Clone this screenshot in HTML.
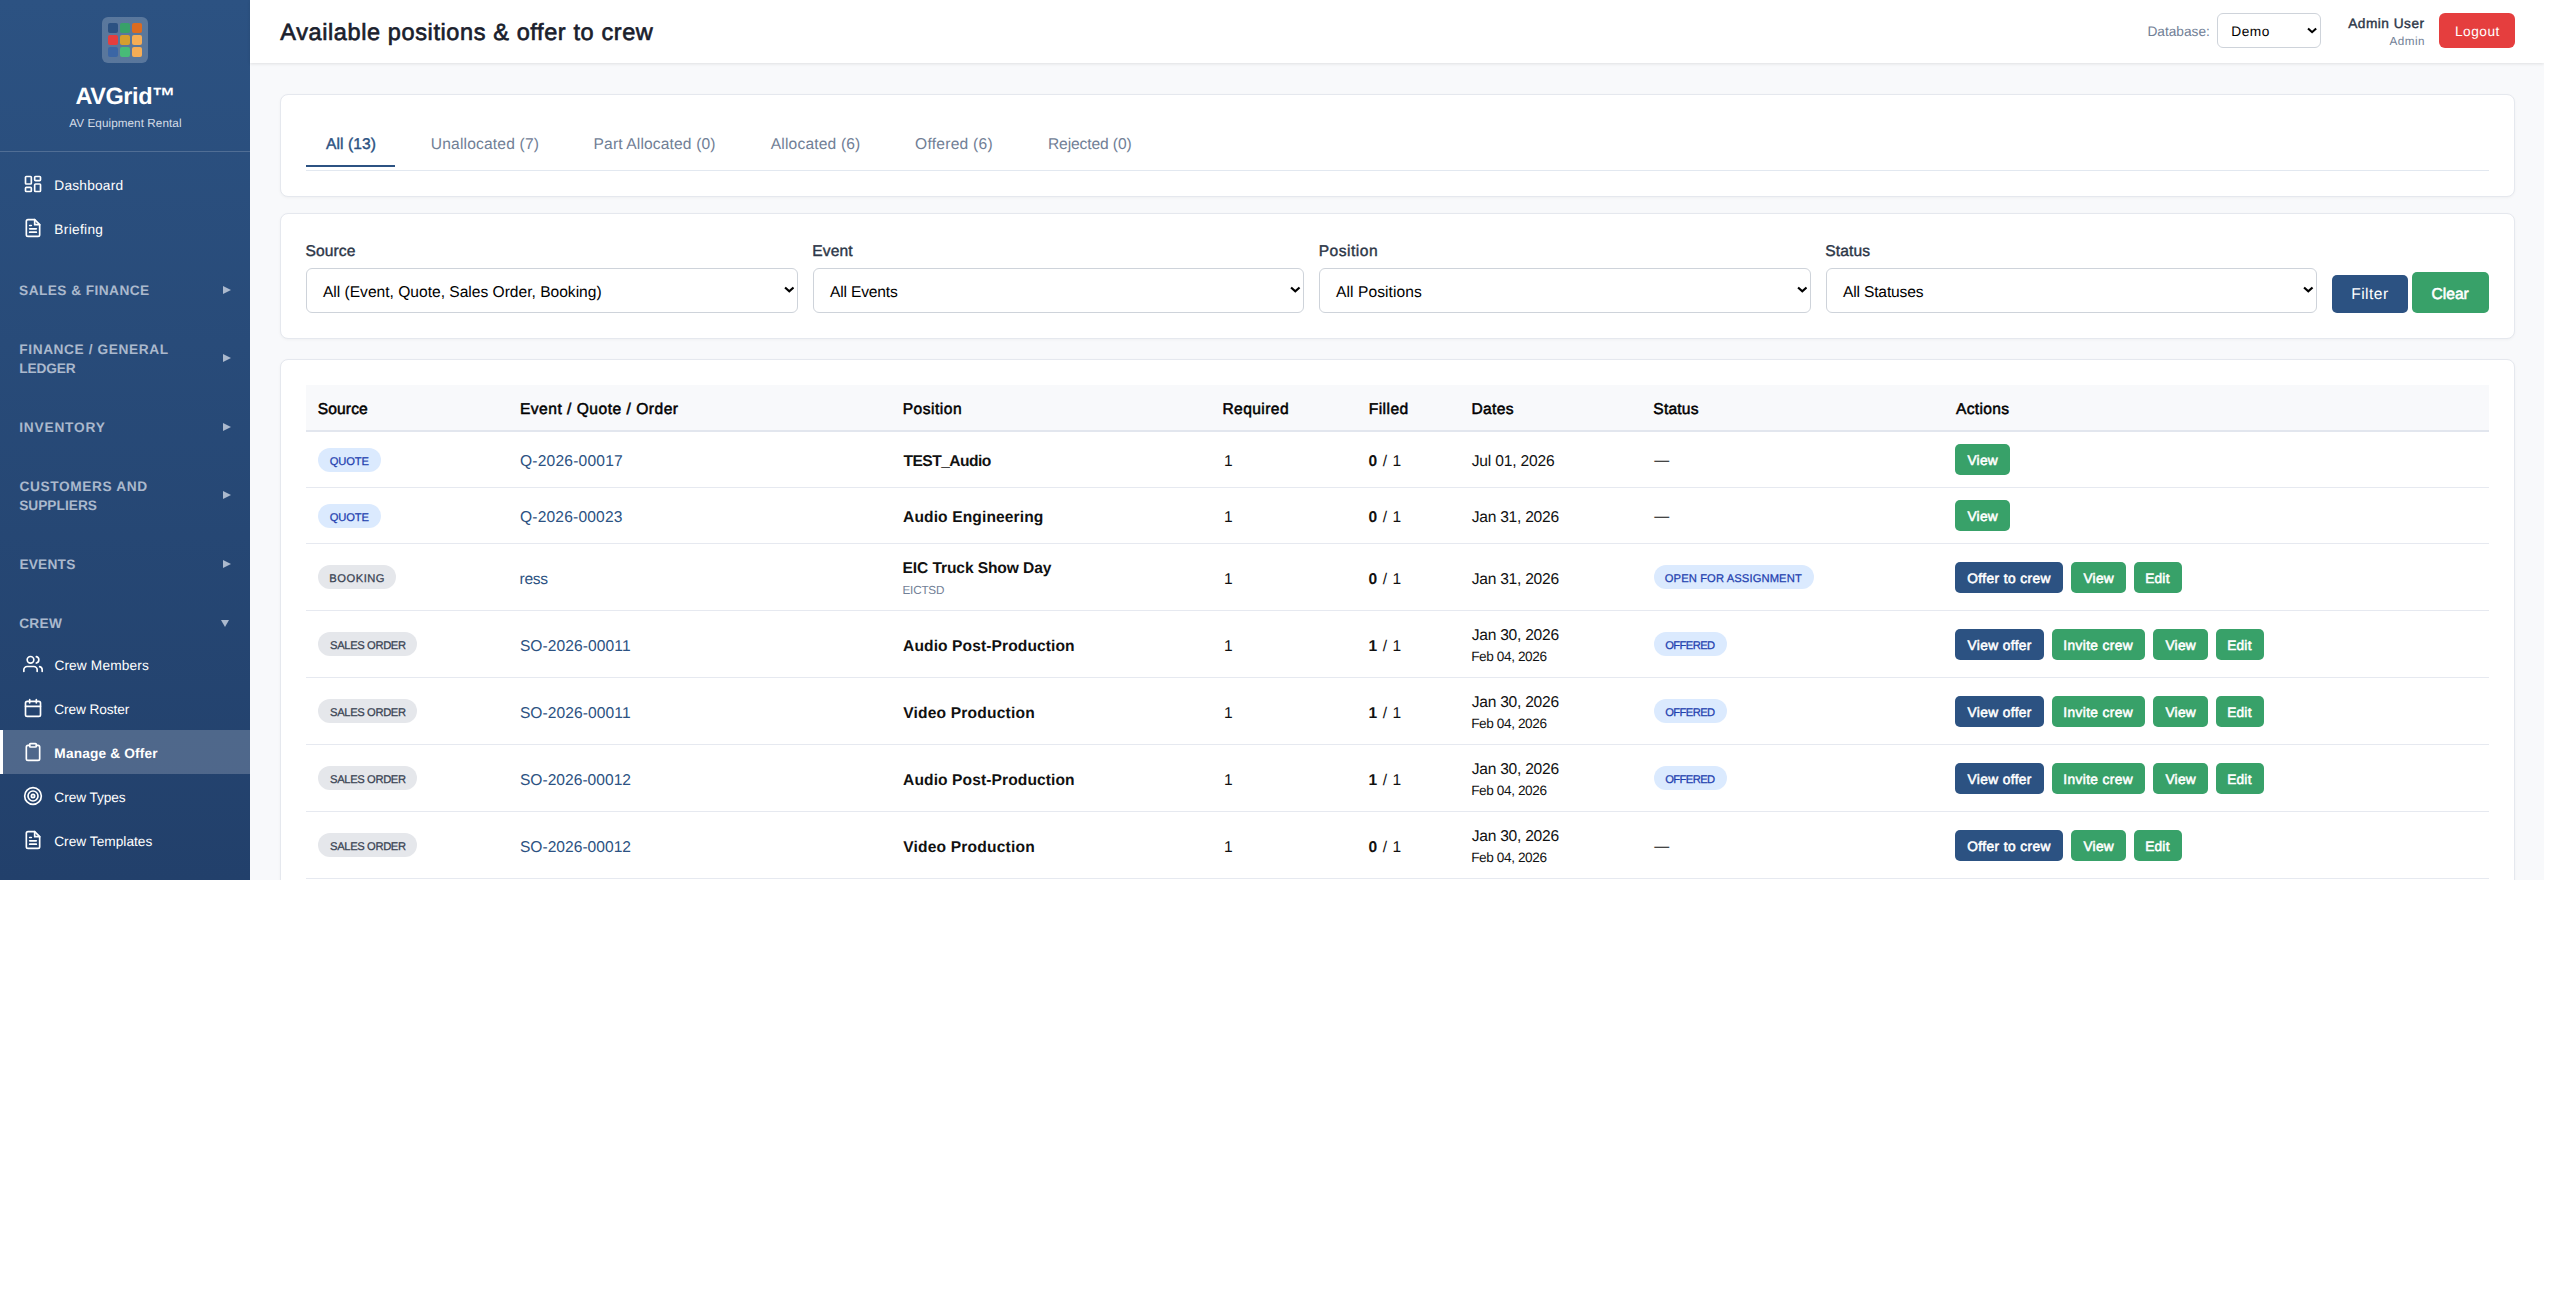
<!DOCTYPE html>
<html lang="en">
<head>
<meta charset="utf-8">
<title>Available positions &amp; offer to crew</title>
<style>
*{box-sizing:border-box;margin:0;padding:0}
html,body{width:2555px;height:1308px;background:#fff;overflow:hidden}
body{font-family:"Liberation Sans",sans-serif;font-size:16px;color:#111;position:relative;text-rendering:geometricPrecision}
#app{position:absolute;left:0;top:0;width:2544px;height:880px;overflow:hidden;background:#f8f9fb}
/* ---------- sidebar ---------- */
#sb{position:absolute;left:0;top:0;width:250px;height:880px;background:linear-gradient(180deg,#2c5282 0%,#22406b 100%);color:#fff;overflow:hidden}
#logo{position:absolute;left:102px;top:17px;width:46px;height:46px;border-radius:6px;background:rgba(255,255,255,.22)}
#logo i{position:absolute;width:10px;height:10px;border-radius:2px}
#brand{position:absolute;left:0;width:250px;top:80px;text-align:center;font-weight:700;font-size:23.5px;line-height:30px}
#sub{position:absolute;left:0;width:250px;top:114px;text-align:center;font-size:11.7px;line-height:18px;color:#d5dde8}
#sbline{position:absolute;left:0;top:151px;width:250px;height:1px;background:rgba(255,255,255,.18)}
.it{position:absolute;left:0;width:250px;height:44px;font-size:13.7px;line-height:46px;color:#fff;white-space:nowrap}
.it>span{position:absolute;left:55px;top:0}
.it svg{position:absolute;left:23px;top:12px;width:20px;height:20px;fill:none;stroke:#fff;stroke-width:2;stroke-linecap:round;stroke-linejoin:round}
.it.on{background:rgba(255,255,255,.2);box-shadow:inset 3px 0 0 #fff}
.it.on>span{font-weight:700}
.sh{position:absolute;left:20px;width:200px;font-size:13.7px;line-height:19.1px;font-weight:700;letter-spacing:.2px;color:#abb9cd;text-transform:uppercase;white-space:nowrap}
.ar{position:absolute;width:0;height:0;border-style:solid}
.ar.r{left:222.8px;margin-top:-.3px;border-width:4.55px 0 4.55px 8px;border-color:transparent transparent transparent #abb9cd}
.ar.d{left:220.5px;margin-top:-.2px;border-width:7.6px 4.65px 0 4.65px;border-color:#abb9cd transparent transparent transparent}
/* ---------- header ---------- */
#hd{position:absolute;left:250px;top:0;width:2294px;height:63px;background:#fff;box-shadow:0 1px 3px rgba(0,0,0,.1)}
#hd h1{position:absolute;left:30px;top:14px;font-size:23.5px;line-height:34px;font-weight:400;color:#1a202c;white-space:nowrap}

.sb6{-webkit-text-stroke:.4px currentColor}
#hd .dbl{position:absolute;left:1898px;top:21px;font-size:13.7px;line-height:20px;color:#718096;white-space:nowrap}
.sel{position:absolute;background:#fff;border:1px solid #ced3da;border-radius:6px;white-space:nowrap;color:#000}
.sel b{position:absolute;font-weight:400}
.sel svg{position:absolute;fill:none;stroke:#000;stroke-width:2.25;stroke-linecap:butt;stroke-linejoin:miter}
#dbsel{left:1967px;top:13px;width:104px;height:35px;font-size:13.7px;line-height:33px}
#dbsel b{left:14px;top:0}
#dbsel svg{left:89.3px;top:13.2px;width:10.2px;height:7.4px}
#hd .un{position:absolute;right:119px;top:13px;font-size:13.7px;line-height:20px;font-weight:400;color:#2d3748;white-space:nowrap}
#hd .ur{position:absolute;right:119px;top:33px;font-size:11.7px;line-height:16px;color:#718096;white-space:nowrap}
#logout{position:absolute;left:2189px;top:13px;width:76px;height:35px;border-radius:6px;background:#e53e3e;color:#fff;font-size:13.7px;line-height:35px;text-align:center}
.card{position:absolute;left:280px;width:2235px;background:#fff;border:1px solid #e5e8ee;border-radius:8px;box-shadow:0 1px 3px rgba(0,0,0,.04)}
.tab{position:absolute;top:136px;font-size:15.6px;line-height:22px;color:#718096;white-space:nowrap}
.tab.on{color:#2c5282}
#tabul{position:absolute;left:306px;top:165px;width:89px;height:2px;background:#2c5282}
#tabln{position:absolute;left:306px;top:170px;width:2183px;height:1px;background:#e2e8f0}
.lbl{position:absolute;top:239px;font-size:15.6px;line-height:22px;color:#2d3748;white-space:nowrap}
.fsel{top:268px;width:491.6px;height:45px;font-size:15.6px;line-height:43px}
.fsel b{left:16px;top:0}
.fsel svg{left:476.8px;top:16.9px;width:10.6px;height:7.7px}
.btn{position:absolute;color:#fff;text-align:center;white-space:nowrap;border-radius:5px}
.bl{background:#2c5282}.gr{background:#38a169}
#bfilter{left:2332px;top:275px;width:76px;height:38px;font-size:15.6px;line-height:37px}
#bclear{left:2412px;top:272px;width:77px;height:41px;font-size:15.6px;line-height:41px}
/* table */
#tb{position:absolute;left:306px;top:385px;width:2183px}
.tr{position:absolute;left:0;width:2183px;border-bottom:1px solid #e6e9f0}
.th{position:absolute;left:0;top:0;width:2183px;height:47px;background:#f8f9fb;border-bottom:2px solid #e2e6ee}
.th>span{position:absolute;top:12px;font-size:15.6px;line-height:22px;color:#000;white-space:nowrap;font-weight:400;-webkit-text-stroke:.5px currentColor}
.c{position:absolute;white-space:nowrap;font-size:15.6px;line-height:22px;color:#111}
.c1{left:12px}.c2{left:214px}.c3{left:597px}.c4{left:917px}.c5{left:1063px}.c6{left:1166px}.c7{left:1348px}.c8{left:1649px}
a.c,.lk{color:#2c5282;text-decoration:none}
.bd{position:absolute;height:24px;border-radius:12px;font-size:11.2px;line-height:24px;text-align:center;white-space:nowrap}
.bq{background:#dbeafe;color:#1e40af}
.bg{background:#e5e7eb;color:#374151}
.sm{font-size:11.7px;color:#718096}
.d2{font-size:13.6px;color:#111}
.ab{position:absolute;height:31px;border-radius:5px;color:#fff;font-size:13.7px;line-height:31px;text-align:center;white-space:nowrap}
.tall .c4,.tall .c5,.tall span.c.c7{margin-top:.7px}
.t-em{position:relative;top:1.5px;left:.3px;font-size:15px}
.ab.sb6,#bclear.sb6{-webkit-text-stroke:.55px currentColor}
.bd .sb6{-webkit-text-stroke:.25px currentColor}
#hd h1.sb6{-webkit-text-stroke:.65px currentColor}
/*TUNE*/
.t-bb{letter-spacing:0.504px;position:relative;left:0.18px;top:2.01px}
.t-bc{letter-spacing:-0.008px;position:relative;left:-0.36px;top:2.01px}
.t-be{letter-spacing:0.245px;position:relative;left:-0.37px;top:1.00px}
.t-bf{letter-spacing:0.452px;position:relative;left:-0.11px;top:1.00px}
.t-bi{letter-spacing:0.405px;position:relative;left:-0.33px;top:1.00px}
.t-bo{letter-spacing:0.438px;position:relative;left:0.06px;top:1.00px}
.t-bq{letter-spacing:-0.125px;position:relative;left:0.06px;top:2.01px}
.t-brand{letter-spacing:-0.439px;position:relative;left:0.30px;top:1.00px}
.t-brief{letter-spacing:0.308px;position:relative;left:-0.66px;top:1.00px}
.t-bs{letter-spacing:-0.363px;position:relative;left:0.38px;top:2.01px}
.t-bv{letter-spacing:0.246px;position:relative;left:0.44px;top:1.00px}
.t-bvo{letter-spacing:0.400px;position:relative;left:0.13px;top:1.00px}
.t-cm{letter-spacing:0.148px;position:relative;left:-0.64px;top:1.01px}
.t-cr{letter-spacing:-0.115px;position:relative;left:-0.66px;top:1.00px}
.t-crew0{letter-spacing:0.264px;position:relative;left:-0.82px;top:0.41px}
.t-cs0{letter-spacing:0.609px;position:relative;left:-0.45px;top:0.42px}
.t-cs1{letter-spacing:0.024px;position:relative;left:-0.85px;top:0.33px}
.t-ct{letter-spacing:-0.079px;position:relative;left:-0.65px;top:1.00px}
.t-ctp{letter-spacing:0.025px;position:relative;left:-0.87px;top:1.00px}
.t-d1{letter-spacing:-0.172px;position:relative;left:-0.31px;top:2.51px}
.t-d2{letter-spacing:-0.250px;position:relative;left:-0.31px;top:2.51px}
.t-d3{letter-spacing:-0.250px;position:relative;left:-0.31px;top:3.01px}
.t-dash{letter-spacing:0.218px;position:relative;left:-0.69px;top:1.00px}
.t-db{letter-spacing:0.012px;position:relative;left:-0.62px;top:1.01px}
.t-dd{letter-spacing:-0.385px;position:relative;left:-0.88px;top:2.00px}
.t-demo{letter-spacing:0.522px;position:relative;left:-0.69px;top:1.01px}
.t-ev0{letter-spacing:0.222px;position:relative;left:-0.62px;top:0.50px}
.t-fg0{letter-spacing:0.596px;position:relative;left:-0.71px;top:0.50px}
.t-fg1{letter-spacing:-0.151px;position:relative;left:-0.66px;top:0.41px}
.t-fl{letter-spacing:0.569px;position:relative;left:-0.40px;top:2.51px}
.t-h1{letter-spacing:0.143px;position:relative;left:-0.39px;top:2.01px}
.t-h2{letter-spacing:0.498px;position:relative;left:-0.13px;top:2.01px}
.t-h3{letter-spacing:0.493px;position:relative;left:-0.29px;top:2.01px}
.t-h4{letter-spacing:0.426px;position:relative;left:-0.64px;top:2.00px}
.t-h5{letter-spacing:0.436px;position:relative;left:-0.29px;top:2.01px}
.t-h6{letter-spacing:0.341px;position:relative;left:-0.63px;top:2.01px}
.t-h7{letter-spacing:0.180px;position:relative;left:-0.67px;top:2.01px}
.t-h8{letter-spacing:0.327px;position:relative;left:0.94px;top:2.01px}
.t-inv0{letter-spacing:0.808px;position:relative;left:-0.78px;top:0.50px}
.t-k1{letter-spacing:0.201px;position:relative;left:-0.01px;top:2.50px}
.t-k2{letter-spacing:0.175px;position:relative;left:-0.01px;top:2.50px}
.t-k3{letter-spacing:-0.324px;position:relative;left:-0.47px;top:3.00px}
.t-k4{letter-spacing:0.077px;position:relative;left:-0.14px;top:3.01px}
.t-k5{letter-spacing:0.014px;position:relative;left:-0.14px;top:3.01px}
.t-l1{letter-spacing:0.122px;position:relative;left:-0.58px;top:2.01px}
.t-l2{letter-spacing:0.086px;position:relative;left:-0.33px;top:2.01px}
.t-l3{letter-spacing:0.500px;position:relative;left:-0.34px;top:2.01px}
.t-l4{letter-spacing:0.107px;position:relative;left:-0.25px;top:2.01px}
.t-lo{letter-spacing:0.520px;position:relative;left:0.39px;top:1.01px}
.t-mo{letter-spacing:0.161px;position:relative;left:-0.65px;top:1.01px}
.t-p1{letter-spacing:-0.521px;position:relative;left:0.40px;top:2.51px}
.t-p2{letter-spacing:0.104px;position:relative;left:0.07px;top:2.50px}
.t-p3{letter-spacing:-0.115px;position:relative;left:-0.45px;top:2.01px}
.t-p4{letter-spacing:0.089px;position:relative;left:0.07px;top:3.01px}
.t-p5{letter-spacing:0.177px;position:relative;left:0.23px;top:3.01px}
.t-rq{position:relative;left:1.03px;top:2.50px}
.t-s1{letter-spacing:-0.010px;position:relative;left:-0.09px;top:2.01px}
.t-s2{letter-spacing:-0.164px;position:relative;left:0.34px;top:2.01px}
.t-s3{letter-spacing:0.072px;position:relative;left:0.00px;top:2.00px}
.t-s4{letter-spacing:-0.158px;position:relative;left:0.33px;top:2.01px}
.t-sf0{letter-spacing:0.440px;position:relative;left:-0.90px;top:0.51px}
.t-sf2{letter-spacing:-0.571px;position:relative;left:-0.46px;top:2.00px}
.t-so{letter-spacing:0.116px;position:relative;left:-0.71px;top:2.01px}
.t-sub{letter-spacing:-0.202px;position:relative;left:-0.47px;top:2.01px}
.t-sub0{letter-spacing:0.077px;position:relative;left:0.42px;top:1.00px}
.t-tab1{letter-spacing:0.076px;position:relative;left:-0.05px;top:-2.00px}
.t-tab2{letter-spacing:0.174px;position:relative;left:-1.21px;top:-2.00px}
.t-tab3{letter-spacing:0.135px;position:relative;left:-1.44px;top:-2.01px}
.t-tab4{letter-spacing:0.163px;position:relative;left:-0.23px;top:-2.01px}
.t-tab5{letter-spacing:0.250px;position:relative;left:-0.95px;top:-2.01px}
.t-tab6{letter-spacing:-0.110px;position:relative;left:-0.06px;top:-2.01px}
.t-title{letter-spacing:0.609px;position:relative;left:0.30px;top:1.01px}
.t-un{letter-spacing:0.488px;position:relative;left:-0.42px;top:1.00px}
.t-ur{letter-spacing:0.493px;position:relative;left:0.09px;top:1.00px}
/*ENDTUNE*/
</style>
</head>
<body>
<div id="app">
  <div id="sb">
    <div id="logo">
      <i style="left:6px;top:6px;background:#2c5282"></i><i style="left:18px;top:6px;background:#38a169"></i><i style="left:30px;top:6px;background:#dd6b20"></i>
      <i style="left:6px;top:18px;background:#e53e3e"></i><i style="left:18px;top:18px;background:#d69e2e"></i><i style="left:30px;top:18px;background:#f6ad55"></i>
      <i style="left:6px;top:30px;background:#3b66a5"></i><i style="left:18px;top:30px;background:#48bb78"></i><i style="left:30px;top:30px;background:#f6ad55"></i>
    </div>
    <div id="brand"><span class="t-brand">AVGrid™</span></div>
    <div id="sub"><span class="t-sub0">AV Equipment Rental</span></div>
    <div id="sbline"></div>
    <div class="it" style="top:162px"><svg viewBox="0 0 24 24"><rect x="3" y="3" width="7" height="9" rx="1"/><rect x="14" y="3" width="7" height="5" rx="1"/><rect x="14" y="12" width="7" height="9" rx="1"/><rect x="3" y="16" width="7" height="5" rx="1"/></svg><span><span class="t-dash">Dashboard</span></span></div>
    <div class="it" style="top:206px"><svg viewBox="0 0 24 24"><path d="M14 2H6a2 2 0 0 0-2 2v16a2 2 0 0 0 2 2h12a2 2 0 0 0 2-2V8z"/><path d="M14 2v6h6"/><path d="M10 9H8"/><path d="M16 13H8"/><path d="M16 17H8"/></svg><span><span class="t-brief">Briefing</span></span></div>
    <div class="it" style="top:642px"><svg viewBox="0 0 24 24"><path d="M17 21v-2a4 4 0 0 0-4-4H5a4 4 0 0 0-4 4v2"/><circle cx="9" cy="7" r="4"/><path d="M23 21v-2a4 4 0 0 0-3-3.87"/><path d="M16 3.13a4 4 0 0 1 0 7.75"/></svg><span><span class="t-cm">Crew Members</span></span></div>
    <div class="it" style="top:686px"><svg viewBox="0 0 24 24"><path d="M8 2v4"/><path d="M16 2v4"/><rect width="18" height="18" x="3" y="4" rx="2"/><path d="M3 10h18"/></svg><span><span class="t-cr">Crew Roster</span></span></div>
    <div class="it on" style="top:730px"><svg viewBox="0 0 24 24"><rect width="8" height="4" x="8" y="2" rx="1" ry="1"/><path d="M16 4h2a2 2 0 0 1 2 2v14a2 2 0 0 1-2 2H6a2 2 0 0 1-2-2V6a2 2 0 0 1 2-2h2"/></svg><span><span class="t-mo">Manage &amp; Offer</span></span></div>
    <div class="it" style="top:774px"><svg viewBox="0 0 24 24"><circle cx="12" cy="12" r="10"/><circle cx="12" cy="12" r="6"/><circle cx="12" cy="12" r="2"/></svg><span><span class="t-ct">Crew Types</span></span></div>
    <div class="it" style="top:818px"><svg viewBox="0 0 24 24"><path d="M14 2H6a2 2 0 0 0-2 2v16a2 2 0 0 0 2 2h12a2 2 0 0 0 2-2V8z"/><path d="M14 2v6h6"/><path d="M10 9H8"/><path d="M16 13H8"/><path d="M16 17H8"/></svg><span><span class="t-ctp">Crew Templates</span></span></div>
    <div class="sh" style="top:280.5px"><span class="t-sf0">Sales &amp; Finance</span></div>
    <div class="ar r" style="top:286.25px"></div>
    <div class="sh" style="top:339.5px"><span class="t-fg0">Finance / General</span><br><span class="t-fg1">Ledger</span></div>
    <div class="ar r" style="top:354.35px"></div>
    <div class="sh" style="top:417.5px"><span class="t-inv0">Inventory</span></div>
    <div class="ar r" style="top:423.35px"></div>
    <div class="sh" style="top:476.6px"><span class="t-cs0">Customers and</span><br><span class="t-cs1">Suppliers</span></div>
    <div class="ar r" style="top:491.35px"></div>
    <div class="sh" style="top:554.5px"><span class="t-ev0">Events</span></div>
    <div class="ar r" style="top:560.45px"></div>
    <div class="sh" style="top:613.6px"><span class="t-crew0">Crew</span></div>
    <div class="ar d" style="top:620.1px"></div>
  </div>
  <div id="hd">
    <h1 class="sb6"><span class="t-title">Available positions &amp; offer to crew</span></h1>
    <div class="dbl"><span class="t-db">Database:</span></div>
    <div class="sel" id="dbsel"><b><span class="t-demo">Demo</span></b><svg viewBox="0 0 11 8"><path d="M1.1 1.5 5.5 5.6 9.9 1.5"/></svg></div>
    <div class="un sb6"><span class="t-un">Admin User</span></div>
    <div class="ur"><span class="t-ur">Admin</span></div>
    <div id="logout"><span class="t-lo">Logout</span></div>
  </div>
  <div id="main">
    <div class="card" style="top:94px;height:103px"></div>
    <div class="card" style="top:213px;height:126px"></div>
    <div class="card" style="top:359px;height:561px"></div>
    <div class="tab on sb6" style="left:326px"><span class="t-tab1">All (13)</span></div>
    <div class="tab" style="left:432px"><span class="t-tab2">Unallocated (7)</span></div>
    <div class="tab" style="left:595px"><span class="t-tab3">Part Allocated (0)</span></div>
    <div class="tab" style="left:771px"><span class="t-tab4">Allocated (6)</span></div>
    <div class="tab" style="left:916px"><span class="t-tab5">Offered (6)</span></div>
    <div class="tab" style="left:1048px"><span class="t-tab6">Rejected (0)</span></div>
    <div id="tabul"></div><div id="tabln"></div>
    <div class="lbl sb6" style="left:306px"><span class="t-l1">Source</span></div>
    <div class="sel fsel" style="left:306px"><b><span class="t-s1">All (Event, Quote, Sales Order, Booking)</span></b><svg viewBox="0 0 11 8"><path d="M1.1 1.5 5.5 5.6 9.9 1.5"/></svg></div>
    <div class="lbl sb6" style="left:812.6px"><span class="t-l2">Event</span></div>
    <div class="sel fsel" style="left:812.6px"><b><span class="t-s2">All Events</span></b><svg viewBox="0 0 11 8"><path d="M1.1 1.5 5.5 5.6 9.9 1.5"/></svg></div>
    <div class="lbl sb6" style="left:1319px"><span class="t-l3">Position</span></div>
    <div class="sel fsel" style="left:1319px"><b><span class="t-s3">All Positions</span></b><svg viewBox="0 0 11 8"><path d="M1.1 1.5 5.5 5.6 9.9 1.5"/></svg></div>
    <div class="lbl sb6" style="left:1825.6px"><span class="t-l4">Status</span></div>
    <div class="sel fsel" style="left:1825.6px"><b><span class="t-s4">All Statuses</span></b><svg viewBox="0 0 11 8"><path d="M1.1 1.5 5.5 5.6 9.9 1.5"/></svg></div>
    <div class="btn bl" id="bfilter"><span class="t-bf">Filter</span></div>
    <div class="btn gr sb6" id="bclear"><span class="t-bc">Clear</span></div>
    <div id="tb">
      <div class="th"><span class="c1"><span class="t-h1">Source</span></span><span class="c2"><span class="t-h2">Event / Quote / Order</span></span><span class="c3"><span class="t-h3">Position</span></span><span class="c4"><span class="t-h4">Required</span></span><span class="c5"><span class="t-h5">Filled</span></span><span class="c6"><span class="t-h6">Dates</span></span><span class="c7"><span class="t-h7">Status</span></span><span class="c8"><span class="t-h8">Actions</span></span></div>
      <div class="tr" style="top:47px;height:56px"><span class="bd bq c1" style="top:16px;width:62.5px"><span class="t-bq sb6">QUOTE</span></span><a class="c c2" style="top:16.5px"><span class="t-k1">Q-2026-00017</span></a><span class="c c3" style="top:16.5px"><b class="t-p1">TEST_Audio</b></span><span class="c c4" style="top:16.5px"><span class="t-rq">1</span></span><span class="c c5" style="top:16.5px"><span class="t-fl"><b>0</b> / 1</span></span><span class="c c6" style="top:16.5px"><span class="t-d1">Jul 01, 2026</span></span><span class="c c7" style="top:16.5px"><span class="t-em">—</span></span><span class="ab gr sb6" style="left:1649px;top:12.0px;width:54.5px"><span class="t-bv">View</span></span></div>
      <div class="tr" style="top:103px;height:56px"><span class="bd bq c1" style="top:16px;width:62.5px"><span class="t-bq sb6">QUOTE</span></span><a class="c c2" style="top:16.5px"><span class="t-k2">Q-2026-00023</span></a><span class="c c3" style="top:16.5px"><b class="t-p2">Audio Engineering</b></span><span class="c c4" style="top:16.5px"><span class="t-rq">1</span></span><span class="c c5" style="top:16.5px"><span class="t-fl"><b>0</b> / 1</span></span><span class="c c6" style="top:16.5px"><span class="t-d2">Jan 31, 2026</span></span><span class="c c7" style="top:16.5px"><span class="t-em">—</span></span><span class="ab gr sb6" style="left:1649px;top:12.0px;width:54.5px"><span class="t-bv">View</span></span></div>
      <div class="tr tall" style="top:159px;height:67px"><span class="bd bg c1" style="top:21.0px;width:78px"><span class="t-bb sb6">BOOKING</span></span><a class="c c2" style="top:22.0px"><span class="t-k3">ress</span></a><span class="c c3" style="top:12.0px"><b class="t-p3">EIC Truck Show Day</b></span><span class="c c3 sm" style="top:34.0px"><span class="t-sub">EICTSD</span></span><span class="c c4" style="top:22.0px"><span class="t-rq">1</span></span><span class="c c5" style="top:22.0px"><span class="t-fl"><b>0</b> / 1</span></span><span class="c c6" style="top:22.0px"><span class="t-d2">Jan 31, 2026</span></span><span class="bd bq c7" style="top:21.0px;width:160px"><span class="t-so sb6">OPEN FOR ASSIGNMENT</span></span><span class="ab bl sb6" style="left:1649px;top:18px;width:108px"><span class="t-bo">Offer to crew</span></span><span class="ab gr sb6" style="left:1765px;top:18px;width:54.5px"><span class="t-bv">View</span></span><span class="ab gr sb6" style="left:1827.5px;top:18px;width:48.6px"><span class="t-be">Edit</span></span></div>
      <div class="tr tall" style="top:226px;height:67px"><span class="bd bg c1" style="top:21.0px;width:99px"><span class="t-bs sb6">SALES ORDER</span></span><a class="c c2" style="top:22.0px"><span class="t-k4">SO-2026-00011</span></a><span class="c c3" style="top:22.0px"><b class="t-p4">Audio Post-Production</b></span><span class="c c4" style="top:22.0px"><span class="t-rq">1</span></span><span class="c c5" style="top:22.0px"><span class="t-fl"><b>1</b> / 1</span></span><span class="c c6" style="top:11.0px"><span class="t-d3">Jan 30, 2026</span></span><span class="c c6 d2" style="top:33.0px"><span class="t-dd">Feb 04, 2026</span></span><span class="bd bq c7" style="top:21.0px;width:72.7px"><span class="t-sf2 sb6">OFFERED</span></span><span class="ab bl sb6" style="left:1649px;top:18px;width:89px"><span class="t-bvo">View offer</span></span><span class="ab gr sb6" style="left:1746px;top:18px;width:93px"><span class="t-bi">Invite crew</span></span><span class="ab gr sb6" style="left:1847px;top:18px;width:54.5px"><span class="t-bv">View</span></span><span class="ab gr sb6" style="left:1909.5px;top:18px;width:48.6px"><span class="t-be">Edit</span></span></div>
      <div class="tr tall" style="top:293px;height:67px"><span class="bd bg c1" style="top:21.0px;width:99px"><span class="t-bs sb6">SALES ORDER</span></span><a class="c c2" style="top:22.0px"><span class="t-k4">SO-2026-00011</span></a><span class="c c3" style="top:22.0px"><b class="t-p5">Video Production</b></span><span class="c c4" style="top:22.0px"><span class="t-rq">1</span></span><span class="c c5" style="top:22.0px"><span class="t-fl"><b>1</b> / 1</span></span><span class="c c6" style="top:11.0px"><span class="t-d3">Jan 30, 2026</span></span><span class="c c6 d2" style="top:33.0px"><span class="t-dd">Feb 04, 2026</span></span><span class="bd bq c7" style="top:21.0px;width:72.7px"><span class="t-sf2 sb6">OFFERED</span></span><span class="ab bl sb6" style="left:1649px;top:18px;width:89px"><span class="t-bvo">View offer</span></span><span class="ab gr sb6" style="left:1746px;top:18px;width:93px"><span class="t-bi">Invite crew</span></span><span class="ab gr sb6" style="left:1847px;top:18px;width:54.5px"><span class="t-bv">View</span></span><span class="ab gr sb6" style="left:1909.5px;top:18px;width:48.6px"><span class="t-be">Edit</span></span></div>
      <div class="tr tall" style="top:360px;height:67px"><span class="bd bg c1" style="top:21.0px;width:99px"><span class="t-bs sb6">SALES ORDER</span></span><a class="c c2" style="top:22.0px"><span class="t-k5">SO-2026-00012</span></a><span class="c c3" style="top:22.0px"><b class="t-p4">Audio Post-Production</b></span><span class="c c4" style="top:22.0px"><span class="t-rq">1</span></span><span class="c c5" style="top:22.0px"><span class="t-fl"><b>1</b> / 1</span></span><span class="c c6" style="top:11.0px"><span class="t-d3">Jan 30, 2026</span></span><span class="c c6 d2" style="top:33.0px"><span class="t-dd">Feb 04, 2026</span></span><span class="bd bq c7" style="top:21.0px;width:72.7px"><span class="t-sf2 sb6">OFFERED</span></span><span class="ab bl sb6" style="left:1649px;top:18px;width:89px"><span class="t-bvo">View offer</span></span><span class="ab gr sb6" style="left:1746px;top:18px;width:93px"><span class="t-bi">Invite crew</span></span><span class="ab gr sb6" style="left:1847px;top:18px;width:54.5px"><span class="t-bv">View</span></span><span class="ab gr sb6" style="left:1909.5px;top:18px;width:48.6px"><span class="t-be">Edit</span></span></div>
      <div class="tr tall" style="top:427px;height:67px"><span class="bd bg c1" style="top:21.0px;width:99px"><span class="t-bs sb6">SALES ORDER</span></span><a class="c c2" style="top:22.0px"><span class="t-k5">SO-2026-00012</span></a><span class="c c3" style="top:22.0px"><b class="t-p5">Video Production</b></span><span class="c c4" style="top:22.0px"><span class="t-rq">1</span></span><span class="c c5" style="top:22.0px"><span class="t-fl"><b>0</b> / 1</span></span><span class="c c6" style="top:11.0px"><span class="t-d3">Jan 30, 2026</span></span><span class="c c6 d2" style="top:33.0px"><span class="t-dd">Feb 04, 2026</span></span><span class="c c7" style="top:22.0px"><span class="t-em">—</span></span><span class="ab bl sb6" style="left:1649px;top:18px;width:108px"><span class="t-bo">Offer to crew</span></span><span class="ab gr sb6" style="left:1765px;top:18px;width:54.5px"><span class="t-bv">View</span></span><span class="ab gr sb6" style="left:1827.5px;top:18px;width:48.6px"><span class="t-be">Edit</span></span></div>
    </div>
  </div>
</div>
</body>
</html>
